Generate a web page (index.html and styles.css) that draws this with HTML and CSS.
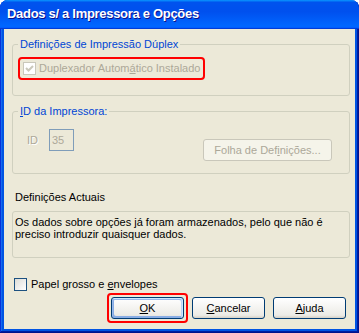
FILE: index.html
```html
<!DOCTYPE html>
<html lang="pt">
<head>
  <meta charset="UTF-8">
  <title>Dados s/ a Impressora e Opções</title>
  <link rel="stylesheet" href="styles.css">
</head>
<body>

  <div class="window">
    <div class="titlebar">
      <span class="title">Dados s/ a Impressora e Opções</span>
    </div>

    <div class="client">
      <fieldset class="group group-duplex">
        <legend>Definições de Impressão Dúplex</legend>
        <div class="mark-row">
          <span class="check disabled">
            <span class="box">
              <svg width="11" height="11" viewBox="0 0 11 11"><path d="M2 5 L4.5 7.5 L9 3" fill="none" stroke="#cac8bb" stroke-width="2"/></svg>
            </span>
            <span>Duplexador Autom<u>á</u>tico Instalado</span>
          </span>
        </div>
      </fieldset>

      <fieldset class="group group-id">
        <legend><u>I</u>D da Impressora:</legend>
        <div class="id-row">
          <span class="id-label">ID</span>
          <span class="id-field">35</span>
          <button class="btn btn-sheet" disabled>Folha de Def<u>i</u>nições...</button>
        </div>
      </fieldset>

      <div class="section-label">Definições Actuais</div>
      <div class="info-box">
        Os dados sobre opções já foram armazenados, pelo que não é<br>
        preciso introduzir quaisquer dados.
      </div>

      <span class="check paper">
        <span class="box"></span>
        <span>Papel grosso e <u>e</u>nvelopes</span>
      </span>

      <div class="buttons">
        <div class="mark-ok">
          <button class="btn btn-default"><u>O</u>K</button>
        </div>
        <button class="btn"><u>C</u>ancelar</button>
        <button class="btn"><u>A</u>juda</button>
      </div>
    </div>
  </div>

</body>
</html>
```

FILE: styles.css
```css
* {
  box-sizing: border-box;
}

body {
  margin: 0;
  font-family: "Liberation Sans", Arial, sans-serif;
  font-size: 11px;
  line-height: 13px;
  color: #000;
  background: #fff;
}

u {
  text-decoration: underline;
  text-underline-offset: 1px;
}

.window {
  width: 359px;
  height: 333px;
  display: flex;
  flex-direction: column;
  background: #0054e3;
  border-radius: 8px 8px 0 0;
  box-shadow: inset -1px -1px #00138c, inset 1px 0 #0831d9, inset -2px -2px #001ea0, inset 2px 0 #166aee;
  overflow: hidden;
}

.titlebar {
  height: 29px;
  flex: none;
  display: flex;
  align-items: center;
  padding: 0 7px 2px;
  background: linear-gradient(180deg, #0997ff, #0053ee 8%, #0050ee 40%, #0066ff 88%, #0066ff 93%, #005bff 95%, #003dd7 96%, #003dd7);
}

.title {
  font-size: 13px;
  font-weight: bold;
  letter-spacing: -0.3px;
  color: #fff;
  text-shadow: 1px 1px #0f1089;
}

.client {
  flex: 1;
  margin: 0 4px 4px 4px;
  padding: 9px 5px 0 8px;
  background: #ece9d8;
  display: flex;
  flex-direction: column;
}

/* group boxes */
.group {
  margin: 0;
  padding: 0 5px;
  border: 1px solid #d0d0bf;
  border-radius: 3px;
}

.group legend {
  padding: 0 2px;
  color: #0046d5;
  line-height: 13px;
}

.group-duplex {
  padding-bottom: 15px;
}

.group-id {
  margin-top: 9px;
  padding-bottom: 12px;
}

/* checkboxes */
.check {
  display: flex;
  align-items: center;
}

.check .box {
  width: 13px;
  height: 13px;
  flex: none;
  border: 1px solid #1c5180;
  background: linear-gradient(135deg, #dcdcd7, #fff);
  margin-right: 4px;
}

.check.disabled {
  color: #aca899;
}

.check.disabled .box {
  border-color: #cac8bb;
  background: #fff;
  margin-right: 3px;
}

.check .box svg {
  display: block;
}

.mark-row {
  margin-top: 6px;
  width: 187px;
  height: 23px;
  padding-left: 3px;
  border: 2px solid #ff0000;
  border-radius: 4px;
  display: flex;
  align-items: center;
}

.paper {
  margin: 20px 0 0 2px;
}

/* printer id */
.id-row {
  margin: 11px 12px 0 9px;
  display: flex;
  align-items: flex-start;
}

.id-label {
  width: 22px;
  line-height: 22px;
  color: #aca899;
  text-shadow: 1px 1px #fff;
}

.id-field {
  width: 25px;
  height: 22px;
  line-height: 20px;
  padding-left: 2px;
  border: 1px solid #7f9db9;
  color: #aca899;
}

.section-label {
  margin: 17px 0 0 3px;
}

.info-box {
  margin-top: 7px;
  height: 47px;
  padding: 4px 2px 0;
  line-height: 12px;
  border: 1px solid #d0d0bf;
  border-radius: 3px;
}

/* buttons */
.btn {
  width: 73px;
  height: 22px;
  padding: 0;
  font-family: inherit;
  font-size: 11px;
  color: #000;
  background: linear-gradient(180deg, #fff, #ecebe6 86%, #d6d0c5);
  border: 1px solid #003c74;
  border-radius: 3px;
}

.btn:disabled {
  color: #aca899;
  background: #f5f4ea;
  border-color: #c9c7ba;
}

.btn-default {
  box-shadow: inset -1px 1px #cee7ff, inset 1px 2px #98b8ea, inset -2px 2px #bcd4f6, inset 1px -1px #89ade4, inset 2px -2px #89ade4;
}

.btn-sheet {
  width: 129px;
  margin: 10px 0 0 auto;
}

.buttons {
  margin: 6px 4px 0 0;
  display: flex;
  justify-content: flex-end;
  gap: 8px;
}

.mark-ok {
  position: relative;
  display: flex;
}

.mark-ok::after {
  content: "";
  position: absolute;
  inset: -4px;
  border: 2px solid #ff0000;
  border-radius: 4px;
}
```
